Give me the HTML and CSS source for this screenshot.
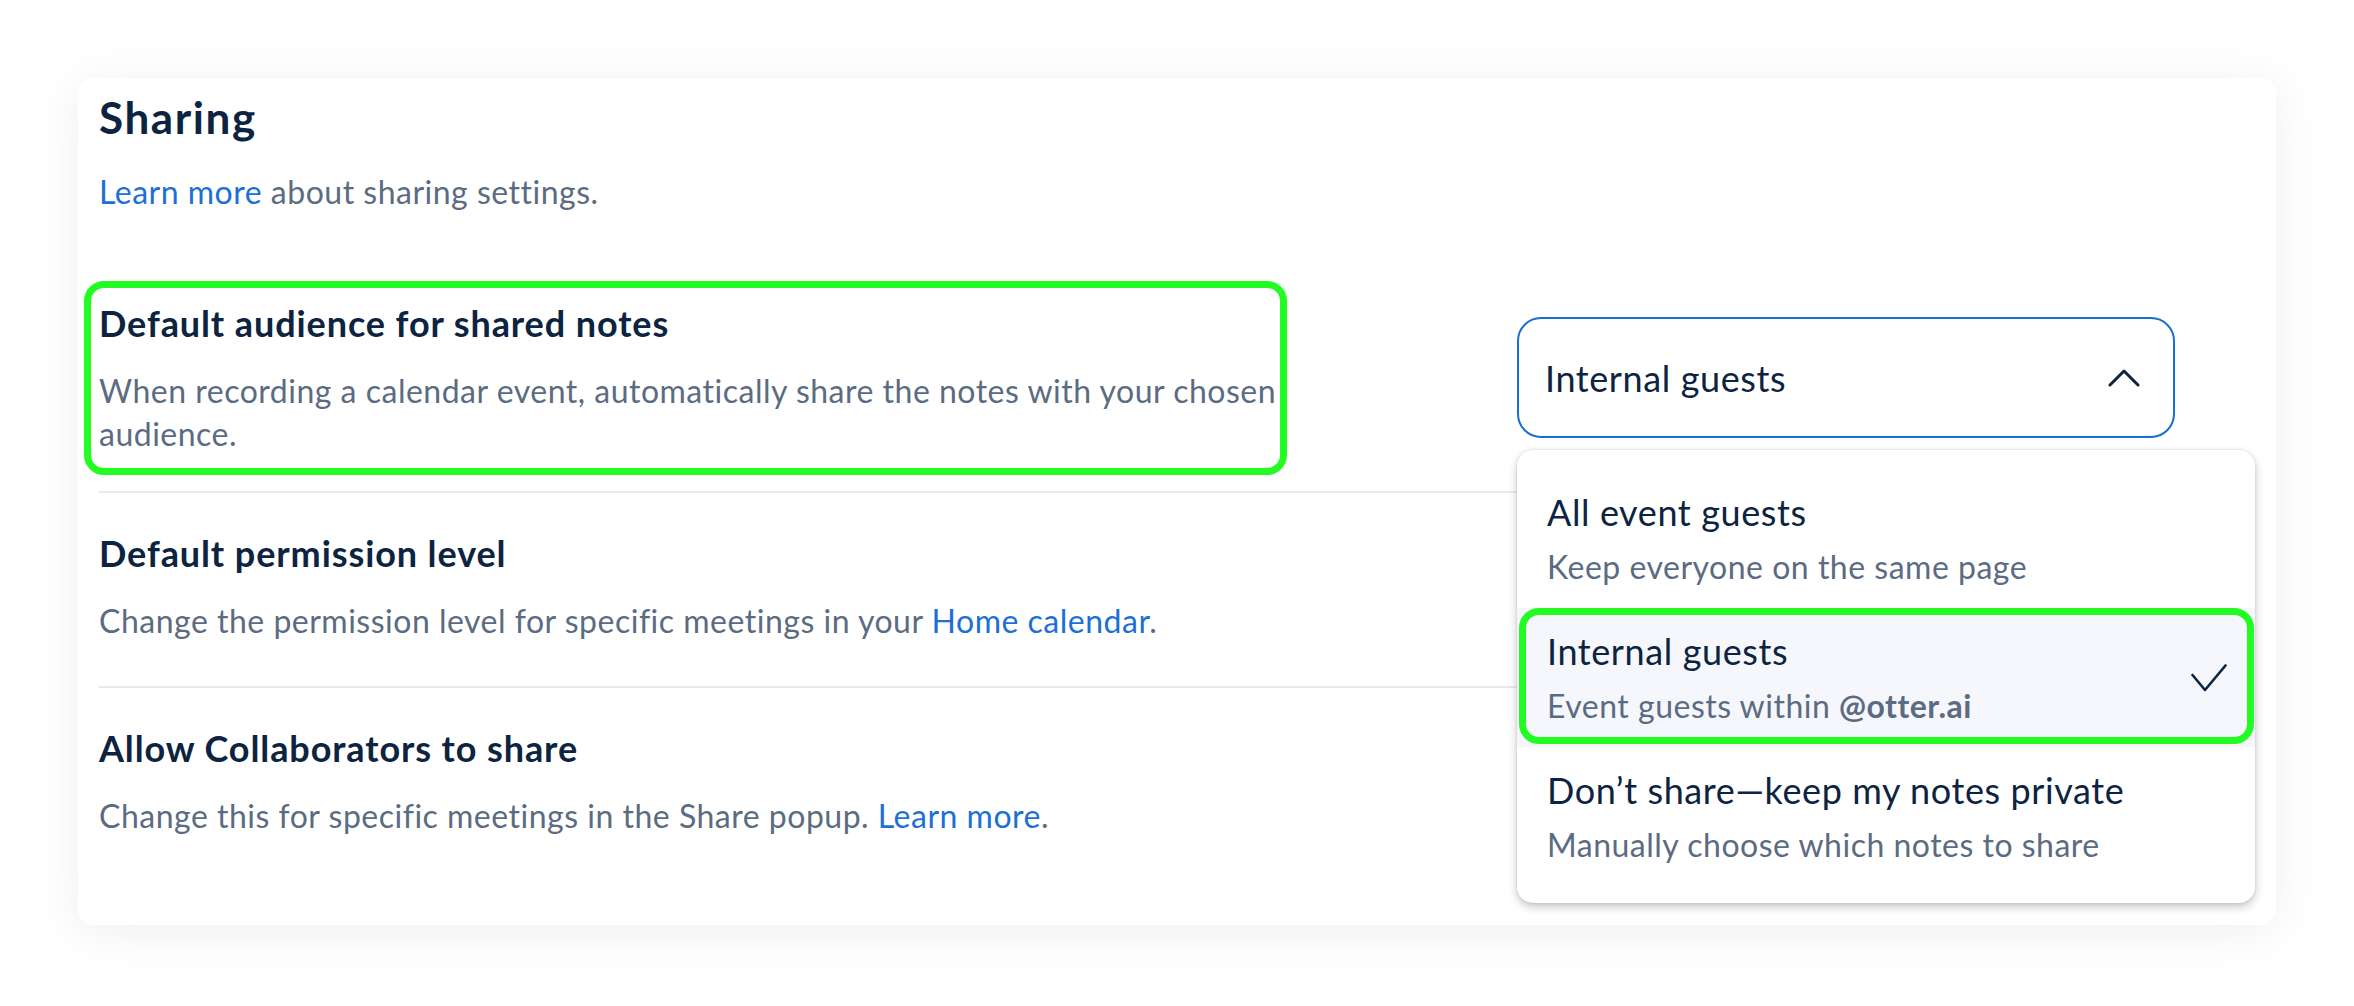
FILE: index.html
```html
<!DOCTYPE html>
<html lang="en">
<head>
<meta charset="utf-8">
<title>Sharing settings</title>
<link rel="stylesheet" href="styles.css">
</head>
<body>
<div class="page">
  <section class="card">
    <h1 class="title">Sharing</h1>
    <p class="intro"><a class="link" href="#">Learn more</a> about sharing settings.</p>

    <div class="row row-first">
      <div class="row-text">
        <h2 class="row-title">Default audience for shared notes</h2>
        <p class="row-desc">When recording a calendar event, automatically share the notes with your chosen audience.</p>
        <div class="annot annot-left"></div>
      </div>
      <div class="row-control">
        <div class="select-wrap">
          <div class="select">
            <span class="select-value">Internal guests</span>
            <svg class="chevron" width="32" height="18" viewBox="0 0 32 18" aria-hidden="true">
              <polyline points="2,16 16,2 30,16" fill="none" stroke="#0d2441" stroke-width="3" stroke-linecap="round" stroke-linejoin="round"/>
            </svg>
          </div>
          <div class="menu">
            <div class="menu-item">
              <div class="item-text">
                <div class="item-title">All event guests</div>
                <div class="item-sub">Keep everyone on the same page</div>
              </div>
            </div>
            <div class="menu-item selected">
              <div class="item-text">
                <div class="item-title">Internal guests</div>
                <div class="item-sub">Event guests within <b class="strong">@otter.ai</b></div>
              </div>
              <svg class="check" width="36" height="28" viewBox="0 0 36 28" aria-hidden="true">
                <polyline points="1.5,11 14,26 34.5,1.5" fill="none" stroke="#0d2441" stroke-width="2.6" stroke-linecap="round" stroke-linejoin="round"/>
              </svg>
              <div class="annot annot-right"></div>
            </div>
            <div class="menu-item">
              <div class="item-text">
                <div class="item-title">Don’t share—keep my notes private</div>
                <div class="item-sub">Manually choose which notes to share</div>
              </div>
            </div>
          </div>
        </div>
      </div>
    </div>

    <div class="row">
      <div class="row-text">
        <h2 class="row-title">Default permission level</h2>
        <p class="row-desc">Change the permission level for specific meetings in your <a class="link" href="#">Home calendar</a>.</p>
      </div>
    </div>

    <div class="row row-last">
      <div class="row-text">
        <h2 class="row-title">Allow Collaborators to share</h2>
        <p class="row-desc">Change this for specific meetings in the Share popup. <a class="link" href="#">Learn more</a>.</p>
      </div>
    </div>
  </section>
</div>
</body>
</html>
```

FILE: styles.css
```css
* {
  box-sizing: border-box;
}

html, body {
  margin: 0;
  padding: 0;
  background: #ffffff;
}

body {
  font-family: "Lato", "Open Sans", "Noto Sans", sans-serif;
  color: #0d2441;
}

.page {
  padding: 78px;
}

.card {
  background: #ffffff;
  border-radius: 16px;
  box-shadow: 0 6px 50px rgba(20, 30, 50, 0.07);
  padding: 14px 21px 44px 21px;
}

.title {
  margin: 0;
  font-size: 44px;
  line-height: 50px;
  font-weight: 700;
  letter-spacing: 1.6px;
  color: #0d2441;
}

.intro {
  margin: 28px 0 49px 0;
  font-size: 32px;
  line-height: 44px;
  letter-spacing: 0.5px;
  color: #5b6c82;
}

.link {
  color: #1d6fd8;
  text-decoration: none;
}

.row {
  display: flex;
  align-items: flex-start;
  padding: 38px 0 44px 0;
  border-bottom: 2px solid #e8e8ee;
}

.row-first {
  padding-bottom: 36px;
  position: relative;
  z-index: 2;
}

.row-last {
  border-bottom: none;
}

.row-text {
  position: relative;
  flex: 0 1 1210px;
}

.row-title {
  margin: 0 0 24px 0;
  font-size: 36px;
  line-height: 44px;
  font-weight: 700;
  letter-spacing: 0.9px;
  color: #0d2441;
}

.row-desc {
  margin: 0;
  font-size: 32px;
  line-height: 43px;
  letter-spacing: 0.5px;
  color: #5b6c82;
}

.row-control {
  margin-left: auto;
  margin-right: 80px;
  width: 658px;
}

.select-wrap {
  position: relative;
  margin-top: 16px;
}

.select {
  height: 121px;
  border: 2px solid #1a6dd1;
  border-radius: 24px;
  background: #ffffff;
  display: flex;
  align-items: center;
  justify-content: space-between;
  padding: 0 33px 0 26px;
}

.select-value {
  font-size: 36px;
  line-height: 44px;
  letter-spacing: 0.6px;
  color: #0d2441;
}

.chevron {
  display: block;
}

.menu {
  position: absolute;
  top: calc(100% + 12px);
  left: 0;
  width: 738px;
  background: #ffffff;
  border-radius: 16px;
  padding: 19px 0 17px 0;
  box-shadow: 0 4px 10px rgba(0, 0, 0, 0.22), 0 0 3px rgba(0, 0, 0, 0.12);
}

.menu-item {
  position: relative;
  height: 139px;
  display: flex;
  align-items: center;
  justify-content: space-between;
  padding: 0 28px 0 30px;
}

.menu-item.selected {
  background: #f5f7fc;
}

.item-title {
  font-size: 36px;
  line-height: 44px;
  letter-spacing: 0.6px;
  color: #0d2441;
}

.item-sub {
  margin-top: 13px;
  font-size: 32px;
  line-height: 40px;
  letter-spacing: 0.5px;
  color: #5b6c82;
}

.strong {
  font-weight: 700;
}

.check {
  display: block;
}

.annot {
  position: absolute;
  border: 7px solid #22fc22;
  border-radius: 20px;
  pointer-events: none;
}

.annot-left {
  top: -20px;
  bottom: -20px;
  left: -15px;
  right: 22px;
}

.annot-right {
  top: 0;
  bottom: 3px;
  left: 2px;
  right: 1px;
}
```
